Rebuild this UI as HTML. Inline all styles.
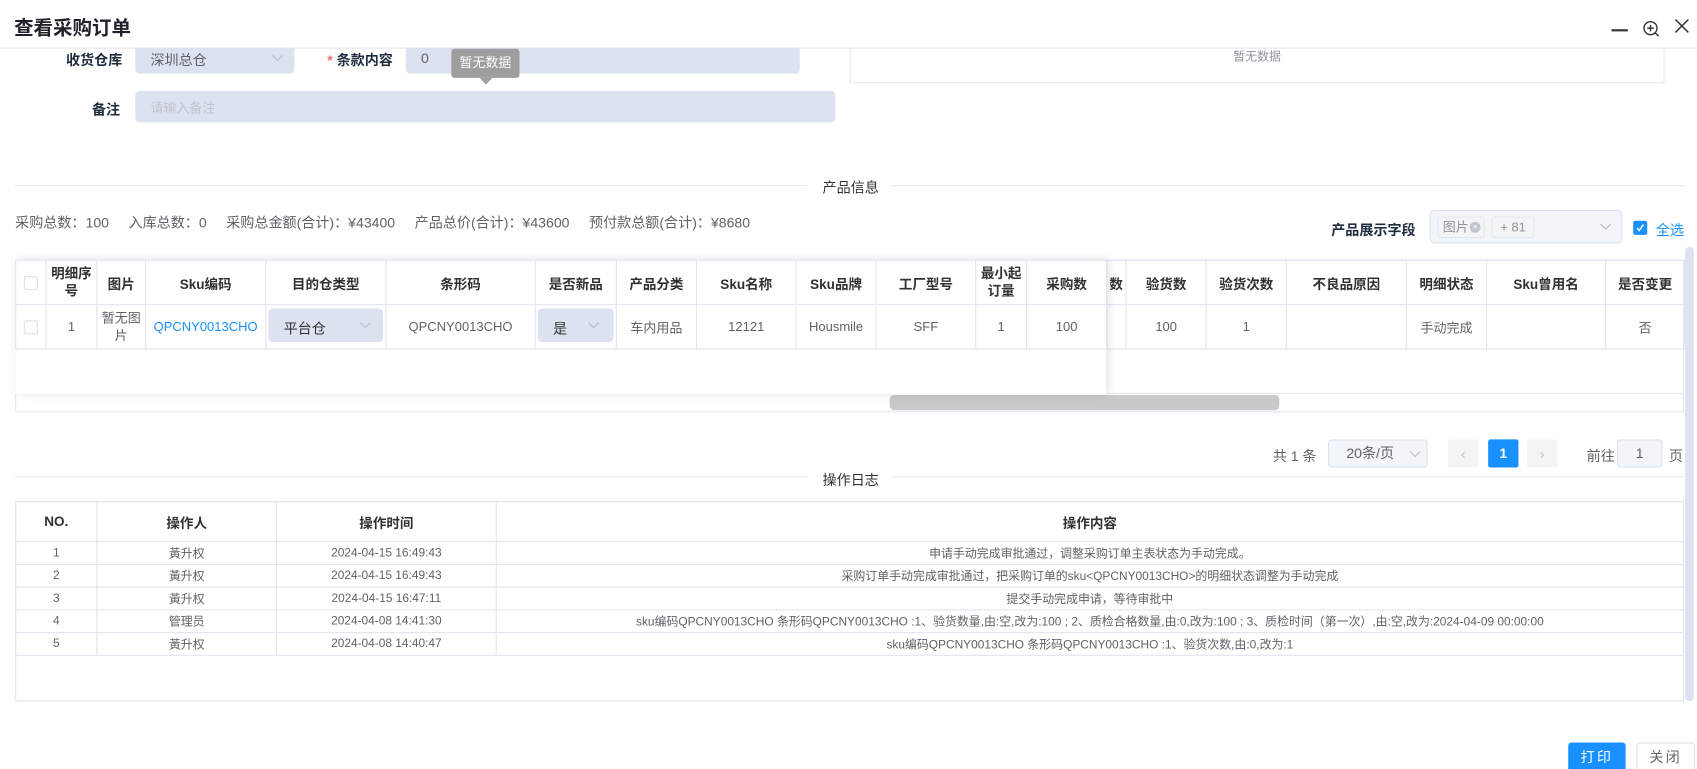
<!DOCTYPE html>
<html><head><meta charset="utf-8">
<style>
*{box-sizing:border-box;margin:0;padding:0}
html,body{width:1697px;height:769px;overflow:hidden;background:#fff}
body{font-family:"Liberation Sans","Noto Sans CJK SC",sans-serif;color:#606266;font-size:12px;position:relative}
#w{position:absolute;left:0;top:0;width:1568px;height:711px;transform:scale(1.0823);transform-origin:0 0}
.a{position:absolute}
.lbl{position:absolute;font-size:13px;color:#1f2d3d;font-weight:bold;text-align:right}
.inp{position:absolute;background:#dce2f0;border-radius:4px}
.t{position:absolute;border-collapse:collapse;table-layout:fixed;font-size:12px}
.t td,.t th{border:1px solid #e1e5ee;text-align:center;color:#606266;font-weight:normal;padding:0 2px;overflow:hidden;white-space:nowrap}
.t th{color:#303133;font-weight:bold;font-size:12.5px}
.chev{position:absolute;width:7px;height:7px;border-right:1px solid #b8bcc6;border-bottom:1px solid #b8bcc6;transform:rotate(45deg)}
.cb{display:inline-block;width:13px;height:13px;border:1px solid #dcdfe6;border-radius:2px;background:#fff;vertical-align:middle}
</style></head><body><div id="w">
<div class="a" style="left:13px;top:12px;font-size:18px;font-weight:bold;color:#1f2329">查看采购订单</div>
<div class="a" style="left:1489px;top:27px;width:15px;height:1.5px;background:#333"></div>
<svg class="a" style="left:1517px;top:18px" width="18" height="18" viewBox="0 0 18 18"><circle cx="8" cy="8" r="6" fill="none" stroke="#333" stroke-width="1.3"/><path d="M8 5v6M5 8h6M12.5 12.5l3 3" stroke="#333" stroke-width="1.3"/></svg>
<svg class="a" style="left:1546px;top:16px" width="16" height="16" viewBox="0 0 16 16"><path d="M2 2l12 12M14 2L2 14" stroke="#333" stroke-width="1.4"/></svg>
<div class="a" style="left:0;top:44px;width:1568px;height:1px;background:#e4e7ed"></div>

<div class="lbl" style="left:40px;top:45px;width:73px">收货仓库</div>
<div class="inp" style="left:125px;top:44px;width:147px;height:24px;border-radius:0 0 4px 4px"><span class="a" style="left:14px;top:1px;font-size:13px;color:#606266">深圳总仓</span><div class="chev" style="left:128px;top:4px"></div></div>
<div class="lbl" style="left:290px;top:45px;width:73px"><span style="color:#f56c6c">*</span> 条款内容</div>
<div class="inp" style="left:375px;top:44px;width:364px;height:24px;border-radius:0 0 4px 4px"><span class="a" style="left:14px;top:2px;font-size:13px;color:#606266">0</span></div>
<div class="a" style="left:417px;top:45px;width:63px;height:27px;background:#9e9e9e;border-radius:3px;color:#fff;font-size:12px;text-align:center;line-height:27px">暂无数据</div>
<div class="a" style="left:443px;top:72px;width:0;height:0;border-left:6px solid transparent;border-right:6px solid transparent;border-top:6px solid #9e9e9e"></div>
<div class="a" style="left:785px;top:44px;width:753px;height:33px;border:1px solid #e4e7ed;border-top:none;text-align:center;color:#909399;font-size:11px;padding-top:0">暂无数据</div>
<div class="lbl" style="left:60px;top:91px;width:51px">备注</div>
<div class="inp" style="left:125px;top:84px;width:647px;height:29px"><span class="a" style="left:14px;top:7px;font-size:12px;color:#c0c4cc">请输入备注</span></div>

<div class="a" style="left:14px;top:171px;width:732px;height:1px;background:#e4e7ed"></div>
<div class="a" style="left:760px;top:163px;font-size:13px;color:#303133">产品信息</div>
<div class="a" style="left:824px;top:171px;width:732px;height:1px;background:#e4e7ed"></div>
<div class="a" style="left:14px;top:195px;font-size:13px;color:#606266">采购总数：100&nbsp;&nbsp;&nbsp;&nbsp;&nbsp;入库总数：0&nbsp;&nbsp;&nbsp;&nbsp;&nbsp;采购总金额(合计)：¥43400&nbsp;&nbsp;&nbsp;&nbsp;&nbsp;产品总价(合计)：¥43600&nbsp;&nbsp;&nbsp;&nbsp;&nbsp;预付款总额(合计)：¥8680</div>
<div class="lbl" style="left:1220px;top:202px;width:88px">产品展示字段</div>
<div class="a" style="left:1321px;top:194px;width:178px;height:31px;background:#f2f5fa;border:1px solid #dce2f0;border-radius:4px">
<div class="a" style="left:6px;top:5px;width:44px;height:20px;border:1px solid #e4e7ed;background:#f4f4f5;border-radius:3px;color:#909399;font-size:12px;line-height:18px;padding-left:4px">图片<span class="a" style="left:29px;top:4px;width:10px;height:10px;border-radius:50%;background:#c0c4cc;color:#fff;font-size:8px;line-height:10px;text-align:center">×</span></div>
<div class="a" style="left:56px;top:5px;width:40px;height:20px;border:1px solid #e4e7ed;background:#f4f4f5;border-radius:3px;color:#909399;font-size:12px;line-height:18px;text-align:center">+ 81</div>
<div class="chev" style="left:158px;top:9px"></div></div>
<div class="a" style="left:1509px;top:204px;width:13px;height:13px;background:#1890ff;border-radius:2px"><svg width="13" height="13"><path d="M3.5 6.5l2 2.5 4-5.5" stroke="#fff" fill="none" stroke-width="1.3"/></svg></div>
<div class="a" style="left:1530px;top:202px;font-size:13px;color:#1890ff">全选</div>

<div class="a" style="left:1557px;top:228px;width:8px;height:420px;background:#dce2f0;border-radius:4px"></div>

<div class="a" style="left:14px;top:240px;width:1542px;height:141px;border:1px solid #e1e5ee"></div>
<table class="t" style="left:1022px;top:240px;width:534px">
<colgroup><col style="width:18px"><col style="width:74px"><col style="width:74px"><col style="width:111px"><col style="width:74px"><col style="width:110px"><col style="width:73px"></colgroup>
<tr style="height:41px"><th style="text-align:left">数</th><th>验货数</th><th>验货次数</th><th>不良品原因</th><th>明细状态</th><th>Sku曾用名</th><th>是否变更</th></tr>
<tr style="height:41px"><td></td><td>100</td><td>1</td><td></td><td>手动完成</td><td></td><td>否</td></tr>
</table>
<div class="a" style="left:14px;top:363px;width:1542px;height:1px;background:#e1e5ee"></div>
<div class="a" style="left:822px;top:365px;width:360px;height:14px;background:#c9c9c9;border-radius:4px"></div>
<div class="a" style="left:14px;top:240px;width:1008px;height:124px;background:#fff;box-shadow:2px 0 8px rgba(0,0,0,.12)">
<table class="t" style="left:0;top:0;width:1008px">
<colgroup><col style="width:28px"><col style="width:47px"><col style="width:45px"><col style="width:111px"><col style="width:111px"><col style="width:138px"><col style="width:75px"><col style="width:74px"><col style="width:92px"><col style="width:74px"><col style="width:92px"><col style="width:47px"><col style="width:74px"></colgroup>
<tr style="height:41px"><th><span class="cb"></span></th><th style="white-space:normal;line-height:16px">明细序号</th><th>图片</th><th>Sku编码</th><th>目的仓类型</th><th>条形码</th><th>是否新品</th><th>产品分类</th><th>Sku名称</th><th>Sku品牌</th><th>工厂型号</th><th style="white-space:normal;line-height:16px">最小起订量</th><th>采购数</th></tr>
<tr style="height:41px"><td><span class="cb"></span></td><td>1</td><td style="white-space:normal;line-height:16px">暂无图片</td><td style="color:#1890ff">QPCNY0013CHO</td>
<td style="position:relative"><div class="inp" style="left:2px;top:3px;width:106px;height:31px;text-align:left;padding:8px 0 0 14px;color:#303133;font-size:13px">平台仓<div class="chev" style="left:86px;top:10px"></div></div></td>
<td>QPCNY0013CHO</td>
<td style="position:relative"><div class="inp" style="left:2px;top:3px;width:70px;height:31px;text-align:left;padding:8px 0 0 14px;color:#303133;font-size:13px">是<div class="chev" style="left:48px;top:10px"></div></div></td>
<td>车内用品</td><td>12121</td><td>Housmile</td><td>SFF</td><td>1</td><td>100</td></tr>
</table></div>

<div class="a" style="left:1176px;top:411px;font-size:13px">共 1 条</div>
<div class="a" style="left:1227px;top:406px;width:92px;height:26px;background:#f2f5fa;border:1px solid #dce2f0;border-radius:3px;text-align:center;line-height:24px;color:#606266;font-size:13px;padding-right:14px">20条/页<div class="chev" style="left:76px;top:7px"></div></div>
<div class="a" style="left:1338px;top:406px;width:28px;height:26px;background:#f4f4f5;border-radius:2px;color:#c0c4cc;text-align:center;line-height:26px;font-size:14px">‹</div>
<div class="a" style="left:1375px;top:406px;width:28px;height:26px;background:#1890ff;border-radius:2px;color:#fff;text-align:center;line-height:26px;font-weight:bold;font-size:13px">1</div>
<div class="a" style="left:1411px;top:406px;width:28px;height:26px;background:#f4f4f5;border-radius:2px;color:#c0c4cc;text-align:center;line-height:26px;font-size:14px">›</div>
<div class="a" style="left:1466px;top:411px;font-size:13px">前往</div>
<div class="a" style="left:1494px;top:406px;width:42px;height:26px;background:#f2f5fa;border:1px solid #dce2f0;border-radius:3px;text-align:center;line-height:24px;font-size:13px">1</div>
<div class="a" style="left:1542px;top:411px;font-size:13px">页</div>

<div class="a" style="left:14px;top:440px;width:732px;height:1px;background:#e4e7ed"></div>
<div class="a" style="left:760px;top:433px;font-size:13px;color:#303133">操作日志</div>
<div class="a" style="left:824px;top:440px;width:732px;height:1px;background:#e4e7ed"></div>

<div class="a" style="left:14px;top:463px;width:1542px;height:185px;border:1px solid #e1e5ee"></div>
<table class="t" style="left:14px;top:463px;width:1542px;font-size:11px">
<colgroup><col style="width:75px"><col style="width:166px"><col style="width:203px"><col></colgroup>
<tr style="height:37px"><th>NO.</th><th>操作人</th><th>操作时间</th><th>操作内容</th></tr>
<tr style="height:21px"><td>1</td><td>黃升权</td><td>2024-04-15 16:49:43</td><td>申请手动完成审批通过，调整采购订单主表状态为手动完成。</td></tr>
<tr style="height:21px"><td>2</td><td>黃升权</td><td>2024-04-15 16:49:43</td><td>采购订单手动完成审批通过，把采购订单的sku&lt;QPCNY0013CHO&gt;的明细状态调整为手动完成</td></tr>
<tr style="height:21px"><td>3</td><td>黃升权</td><td>2024-04-15 16:47:11</td><td>提交手动完成申请，等待审批中</td></tr>
<tr style="height:21px"><td>4</td><td>管理员</td><td>2024-04-08 14:41:30</td><td>sku编码QPCNY0013CHO 条形码QPCNY0013CHO :1、验货数量,由:空,改为:100 ; 2、质检合格数量,由:0,改为:100 ; 3、质检时间（第一次）,由:空,改为:2024-04-09 00:00:00</td></tr>
<tr style="height:21px"><td>5</td><td>黃升权</td><td>2024-04-08 14:40:47</td><td>sku编码QPCNY0013CHO 条形码QPCNY0013CHO :1、验货次数,由:0,改为:1</td></tr>
</table>

<div class="a" style="left:1449px;top:686px;width:53px;height:28px;background:#1890ff;border-radius:3px;color:#fff;text-align:center;line-height:28px;font-size:13px;letter-spacing:2px">打印</div>
<div class="a" style="left:1512px;top:686px;width:54px;height:28px;border:1px solid #dcdfe6;border-radius:3px;color:#606266;text-align:center;line-height:26px;font-size:13px;letter-spacing:2px">关闭</div>
</div></body></html>
